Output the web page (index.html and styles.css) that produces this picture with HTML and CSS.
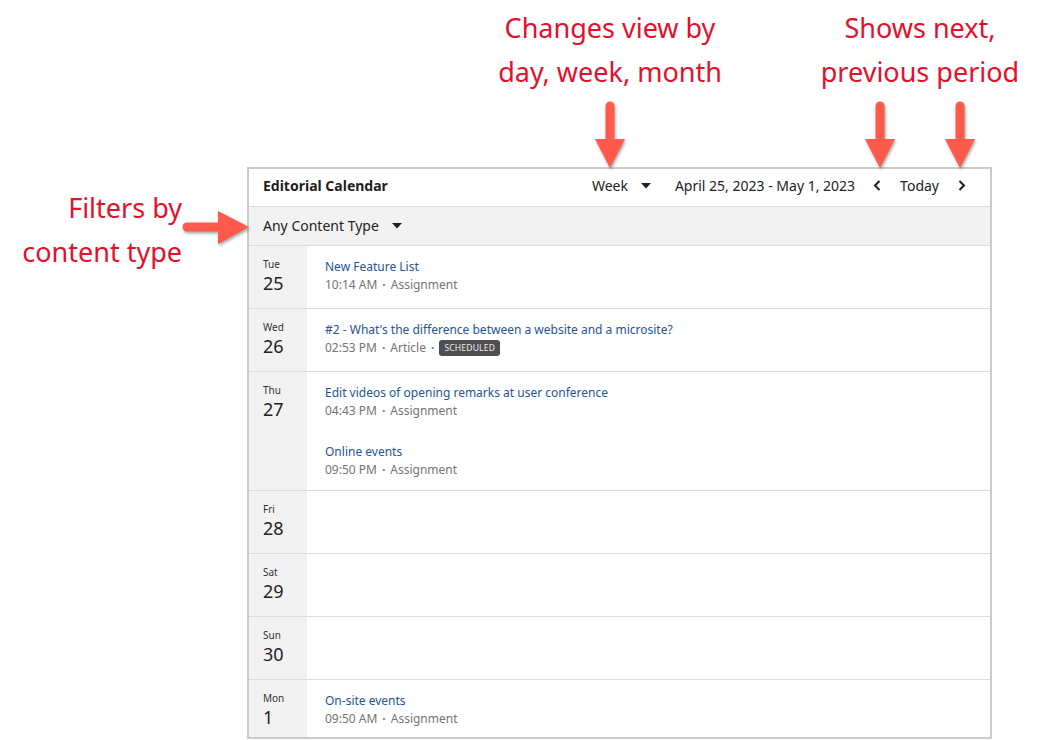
FILE: index.html
```html
<!DOCTYPE html>
<html lang="en">
<head>
<meta charset="utf-8">
<title>Editorial Calendar</title>
<link rel="stylesheet" href="styles.css">
</head>
<body>
<div class="canvas">
  <div class="note note-view">Changes view by<br>day, week, month</div>
  <div class="note note-period">Shows next,<br>previous period</div>
  <div class="note note-filter">Filters by<br>content type</div>

  <svg class="arrow arrow-down arrow-view" width="40" height="70" viewBox="0 0 40 70"><line x1="20" y1="5" x2="20" y2="40" /><polygon points="5,38 35,38 20,67" /></svg>
  <svg class="arrow arrow-down arrow-prev" width="40" height="70" viewBox="0 0 40 70"><line x1="20" y1="5" x2="20" y2="40" /><polygon points="5,38 35,38 20,67" /></svg>
  <svg class="arrow arrow-down arrow-next" width="40" height="70" viewBox="0 0 40 70"><line x1="20" y1="5" x2="20" y2="40" /><polygon points="5,38 35,38 20,67" /></svg>
  <svg class="arrow arrow-right" width="74" height="44" viewBox="0 0 74 44"><line x1="7" y1="21" x2="40" y2="21" /><polygon points="38,5 38,38 69,21" /></svg>

  <section class="calendar">
    <header class="cal-header">
      <h1 class="cal-title">Editorial Calendar</h1>
      <div class="cal-controls">
        <span class="dropdown">Week <svg class="caret" width="10" height="6" viewBox="0 0 10 6"><polygon points="0,0 10,0 5,5.5"/></svg></span>
        <span class="range">April 25, 2023 - May 1, 2023</span>
        <svg class="chev chev-prev" width="9" height="11" viewBox="0 0 9 11"><polyline points="6.5,1 2,5.5 6.5,10"/></svg>
        <span class="today">Today</span>
        <svg class="chev chev-next" width="9" height="11" viewBox="0 0 9 11"><polyline points="2.5,1 7,5.5 2.5,10"/></svg>
      </div>
    </header>
    <div class="cal-filter">
      <span class="dropdown">Any Content Type <svg class="caret" width="10" height="6" viewBox="0 0 10 6"><polygon points="0,0 10,0 5,5.5"/></svg></span>
    </div>

    <div class="day">
      <div class="day-label"><div class="dow">Tue</div><div class="dom">25</div></div>
      <div class="events">
        <div class="event"><a class="ev-title">New Feature List</a><div class="ev-meta">10:14 AM<span class="sep">·</span>Assignment</div></div>
      </div>
    </div>
    <div class="day">
      <div class="day-label"><div class="dow">Wed</div><div class="dom">26</div></div>
      <div class="events">
        <div class="event"><a class="ev-title">#2 - What's the difference between a website and a microsite?</a><div class="ev-meta">02:53 PM<span class="sep">·</span>Article<span class="sep">·</span><span class="badge">SCHEDULED</span></div></div>
      </div>
    </div>
    <div class="day">
      <div class="day-label"><div class="dow">Thu</div><div class="dom">27</div></div>
      <div class="events">
        <div class="event"><a class="ev-title">Edit videos of opening remarks at user conference</a><div class="ev-meta">04:43 PM<span class="sep">·</span>Assignment</div></div>
        <div class="event"><a class="ev-title">Online events</a><div class="ev-meta">09:50 PM<span class="sep">·</span>Assignment</div></div>
      </div>
    </div>
    <div class="day">
      <div class="day-label"><div class="dow">Fri</div><div class="dom">28</div></div>
      <div class="events"></div>
    </div>
    <div class="day">
      <div class="day-label"><div class="dow">Sat</div><div class="dom">29</div></div>
      <div class="events"></div>
    </div>
    <div class="day">
      <div class="day-label"><div class="dow">Sun</div><div class="dom">30</div></div>
      <div class="events"></div>
    </div>
    <div class="day day-last">
      <div class="day-label"><div class="dow">Mon</div><div class="dom">1</div></div>
      <div class="events">
        <div class="event"><a class="ev-title">On-site events</a><div class="ev-meta">09:50 AM<span class="sep">·</span>Assignment</div></div>
      </div>
    </div>
  </section>
</div>
</body>
</html>
```
FILE: styles.css
```css
* { box-sizing: border-box; }

html, body {
  margin: 0;
  padding: 0;
  background: #ffffff;
}

body {
  font-family: "Noto Sans", "Open Sans", sans-serif;
  color: #222222;
}

.canvas {
  position: relative;
  width: 1062px;
  height: 740px;
  overflow: hidden;
  padding-top: 167px;
  padding-left: 247px;
}

/* annotations */
.note {
  position: absolute;
  color: #e4102c;
  font-size: 27px;
  line-height: 44px;
  white-space: nowrap;
}
.note-view {
  top: 6px;
  left: 460px;
  width: 300px;
  text-align: center;
}
.note-period {
  top: 6px;
  left: 770px;
  width: 300px;
  text-align: center;
}
.note-filter {
  top: 186px;
  left: 0;
  width: 182px;
  text-align: right;
}

.arrow {
  position: absolute;
  overflow: visible;
  filter: drop-shadow(1px 2px 1.5px rgba(0, 0, 0, 0.35));
}
.arrow line {
  stroke: #ff5a4c;
  stroke-width: 9;
  stroke-linecap: round;
}
.arrow polygon {
  fill: #ff5a4c;
}
.arrow-view { left: 590px; top: 101px; }
.arrow-prev { left: 860px; top: 101px; }
.arrow-next { left: 940px; top: 101px; }
.arrow-right { left: 180px; top: 206px; }

/* calendar */
.calendar {
  width: 745px;
  height: 572px;
  border: 2px solid #cbcbcb;
  background: #ffffff;
  overflow: hidden;
}

.cal-header {
  display: flex;
  justify-content: space-between;
  align-items: flex-start;
  height: 38px;
  padding: 7px 24px 0 14px;
  border-bottom: 1px solid #dcdcdc;
}
.cal-title {
  margin: 0;
  font-size: 14px;
  line-height: 20px;
  font-weight: 700;
  color: #1e1e1e;
}
.cal-controls {
  display: flex;
  align-items: center;
  height: 19px;
  font-size: 14px;
  color: #222222;
}
.dropdown {
  display: inline-flex;
  align-items: center;
  font-size: 14px;
  line-height: 20px;
  color: #222222;
}
.caret {
  margin-left: 13px;
  fill: #222222;
}
.range {
  margin-left: 24px;
}
.chev {
  fill: none;
  stroke: #1e1e1e;
  stroke-width: 2;
}
.chev-prev { margin-left: 18px; }
.today { margin-left: 18px; }
.chev-next { margin-left: 18px; }

.cal-filter {
  height: 39px;
  padding: 7px 14px 0;
  background: #f2f2f2;
  border-bottom: 1px solid #dcdcdc;
}

.day {
  display: flex;
  min-height: 63px;
  border-bottom: 1px solid #dcdcdc;
}
.day-last {
  border-bottom: none;
}
.day-label {
  flex: 0 0 58px;
  background: #f2f2f2;
  padding: 11px 0 0 14px;
}
.dow {
  font-size: 10px;
  line-height: 14px;
  color: #333333;
}
.dom {
  font-size: 18px;
  line-height: 25px;
  color: #222222;
}
.events {
  flex: 1;
  display: flex;
  flex-direction: column;
  gap: 23px;
  padding: 12px 18px 11px;
}
.event {
  display: flex;
  flex-direction: column;
}
.ev-title {
  font-size: 12px;
  line-height: 18px;
  color: #265496;
  text-decoration: none;
}
.ev-meta {
  display: flex;
  align-items: center;
  font-size: 12px;
  line-height: 18px;
  color: #747474;
}
.sep {
  margin: 0 5px;
  font-weight: 700;
}
.badge {
  display: inline-block;
  height: 16px;
  padding: 0 5px;
  border-radius: 3px;
  background: #4e4e50;
  color: #eeeeee;
  font-size: 8.5px;
  line-height: 16px;
  letter-spacing: 0.2px;
}
```
